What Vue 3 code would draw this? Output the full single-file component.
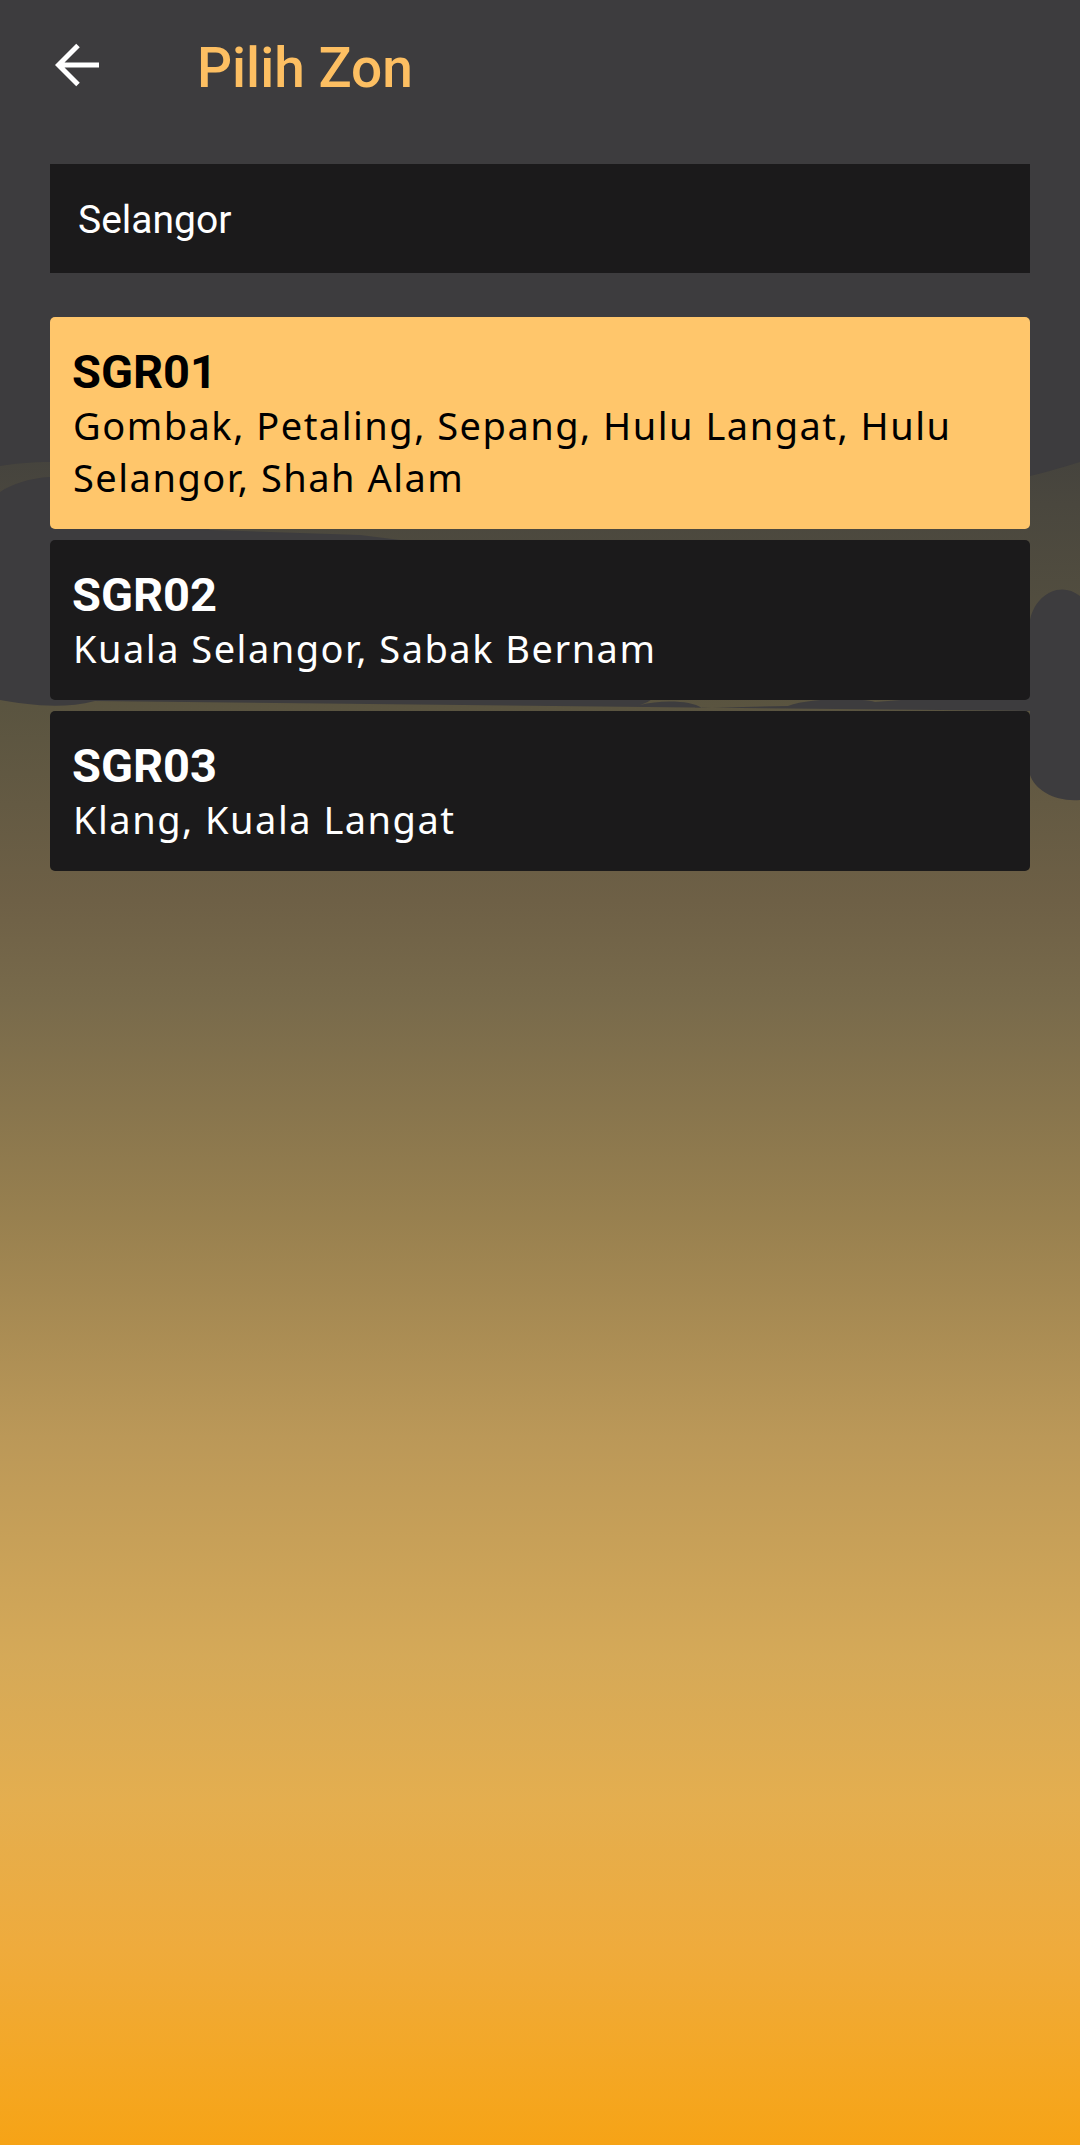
<script setup>
const zones = [
  { code: 'SGR01', desc: 'Gombak, Petaling, Sepang, Hulu Langat, Hulu Selangor, Shah Alam', active: true },
  { code: 'SGR02', desc: 'Kuala Selangor, Sabak Bernam', active: false },
  { code: 'SGR03', desc: 'Klang, Kuala Langat', active: false },
]
</script>

<template>
  <div class="page">
    <svg class="backdrop" viewBox="0 0 1080 2145" preserveAspectRatio="none" aria-hidden="true">
      <defs>
        <linearGradient id="sky" x1="0" y1="0" x2="0" y2="1">
          <stop offset="0" stop-color="#3c3c3e" />
          <stop offset="0.2" stop-color="#42413d" />
          <stop offset="0.235" stop-color="#4a473e" />
          <stop offset="0.33" stop-color="#5a5440" />
          <stop offset="0.42" stop-color="#6e6046" />
          <stop offset="0.466" stop-color="#786a4b" />
          <stop offset="0.568" stop-color="#98804f" />
          <stop offset="0.67" stop-color="#bb9858" />
          <stop offset="0.772" stop-color="#d5a958" />
          <stop offset="0.84" stop-color="#e4ae4f" />
          <stop offset="0.909" stop-color="#efab3c" />
          <stop offset="0.977" stop-color="#f5a61f" />
          <stop offset="1" stop-color="#f6a316" />
        </linearGradient>
      </defs>
      <rect width="1080" height="2145" fill="url(#sky)" />
      <path class="cloud" d="M0 0H1080V462C1060 468 1040 474 1030 476C900 490 400 470 50 462C30 462 12 464 0 466Z" />
      <path class="cloud" d="M0 492C12 484 30 478 50 477C90 472 180 490 210 530L360 535L400 540C600 560 700 690 640 705C660 700 690 700 702 708L788 706C810 698 860 698 875 702L1030 690L1030 620C1035 595 1060 580 1080 596V800C1055 802 1035 790 1030 775L1030 711L95 701C60 710 25 704 0 700Z" />
    </svg>

    <header class="bar">
      <svg class="back" viewBox="0 0 46 46" aria-hidden="true">
        <path d="M44 23H4M23 3.5 3.5 23 23 42.5" fill="none" stroke="#fff" stroke-width="5" />
      </svg>
      <h1 class="title">Pilih Zon</h1>
    </header>

    <div class="search">Selangor</div>

    <ul class="zones">
      <li v-for="zone in zones" :key="zone.code" class="zone" :class="{ active: zone.active }">
        <div class="code">{{ zone.code }}</div>
        <div class="desc">{{ zone.desc }}</div>
      </li>
    </ul>
  </div>
</template>

<style scoped>
.page {
  position: relative;
  width: 1080px;
  height: 2145px;
  overflow: hidden;
  padding: 0 50px;
  box-sizing: border-box;
  font-family: Roboto, "Liberation Sans", sans-serif;
}
.backdrop {
  position: absolute;
  inset: 0;
  width: 1080px;
  height: 2145px;
}
.cloud {
  fill: #3d3c3e;
}
.bar {
  position: relative;
  display: flex;
  align-items: center;
  height: 130px;
}
.back {
  width: 46px;
  height: 46px;
  margin-left: 5px;
  flex: none;
}
.title {
  margin: 0 0 0 96px;
  padding-top: 5px;
  font-size: 55px;
  font-weight: 500;
  line-height: 64px;
  color: #fdbf62;
}
.search {
  position: relative;
  margin-top: 34px;
  height: 109px;
  padding-left: 28px;
  background: #1b1a1b;
  color: #fff;
  font-size: 39px;
  line-height: 112px;
}
.zones {
  position: relative;
  list-style: none;
  margin: 44px 0 0;
  padding: 0;
  display: flex;
  flex-direction: column;
  gap: 11px;
}
.zone {
  padding: 28px 22px 26px;
  border-radius: 5px;
  background: #1b1a1b;
  color: #fff;
}
.zone.active {
  background: #ffc66b;
  color: #000;
}
.code {
  font-size: 47px;
  font-weight: 700;
  line-height: 54px;
}
.desc {
  font-family: "Noto Sans", sans-serif;
  font-size: 38px;
  line-height: 52px;
  letter-spacing: 1.5px;
  padding-left: 1px;
}
</style>
